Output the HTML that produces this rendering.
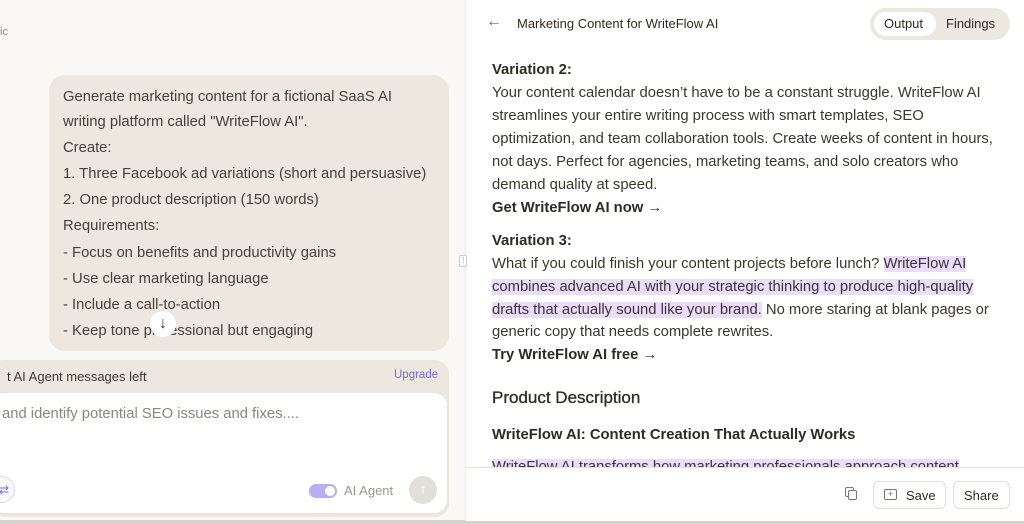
<!DOCTYPE html>
<html><head><meta charset="utf-8"><style>
*{margin:0;padding:0;box-sizing:border-box}
body{width:1024px;height:524px;overflow:hidden;font-family:"Liberation Sans",sans-serif;background:#f9f8f5;position:relative;color:#3a3632}
.a{position:absolute;white-space:nowrap}
.lt{font-size:14.8px;color:#46413b;left:63px}
.rt{font-size:14.8px;color:#3a3632;left:492px}
.b{font-weight:bold;color:#2e2a26}
.hl{background:#ebdcfb}
</style></head><body>
<div class="a" style="left:0;top:26px;font-size:11px;color:#888">ic</div>
<div class="a" style="left:49px;top:75px;width:400px;height:276px;background:#ece8df;border-radius:16px"></div>
<div class="a lt" style="top:89px">Generate marketing content for a fictional SaaS AI</div>
<div class="a lt" style="top:114px">writing platform called "WriteFlow AI".</div>
<div class="a lt" style="top:140px">Create:</div>
<div class="a lt" style="top:166px">1. Three Facebook ad variations (short and persuasive)</div>
<div class="a lt" style="top:192px">2. One product description (150 words)</div>
<div class="a lt" style="top:218px">Requirements:</div>
<div class="a lt" style="top:245px">- Focus on benefits and productivity gains</div>
<div class="a lt" style="top:271px">- Use clear marketing language</div>
<div class="a lt" style="top:297px">- Include a call-to-action</div>
<div class="a lt" style="top:323px">- Keep tone professional but engaging</div>
<div class="a" style="left:150px;top:311px;width:26px;height:26px;border-radius:50%;background:#fff;text-align:center;font-size:16px;line-height:26px;color:#333">↓</div>
<div class="a" style="left:-10px;top:360px;width:459px;height:157px;background:#ece8df;border-radius:14px"></div>
<div class="a" style="left:7px;top:369px;font-size:13px;color:#3d3833">t AI Agent messages left</div>
<div class="a" style="left:394px;top:369px;font-size:11.5px;color:#7a68d8">Upgrade</div>
<div class="a" style="left:-10px;top:392px;width:458px;height:122px;background:#fff;border-radius:14px;border:1px solid #e8e4dc"></div>
<div class="a" style="left:2px;top:406px;font-size:14.8px;color:#8a8580">and identify potential SEO issues and fixes....</div>
<div class="a" style="left:-12px;top:476px;width:27px;height:27px;border-radius:50%;border:1px solid #ddd4f5;background:#faf8ff;color:#7a68d8;font-size:12px;text-align:right;padding-right:5px;line-height:26px">⇄</div>
<div class="a" style="left:309px;top:484px;width:28px;height:14px;border-radius:7px;background:#b9aef0"><div style="position:absolute;right:2px;top:2px;width:10px;height:10px;border-radius:50%;background:#fff"></div></div>
<div class="a" style="left:344px;top:483px;font-size:13px;color:#9a958f">AI Agent</div>
<div class="a" style="left:409px;top:476px;width:28px;height:28px;border-radius:50%;background:#e2dfdb;color:#fff;text-align:center;line-height:28px;font-size:15px">↑</div>
<div class="a" style="left:0;top:520px;width:465px;height:4px;background:#d6d3cf"></div>
<div class="a" style="left:465px;top:0;width:559px;height:524px;background:#fff;border-left:1px solid #ecebe8"></div>
<div class="a" style="left:459px;top:255px;width:8px;height:12px;border:1px solid #ccc;border-radius:2px;background:#fff;font-size:7px;line-height:10px;text-align:center;color:#888">⋮</div>
<div class="a" style="left:486px;top:13px;font-size:16px;color:#666">←</div>
<div class="a" style="left:517px;top:16px;font-size:13px;color:#2e2a26">Marketing Content for WriteFlow AI</div>
<div class="a" style="left:870px;top:8px;width:140px;height:32px;border-radius:16px;background:#ece8df"></div>
<div class="a" style="left:874px;top:12px;width:62px;height:24px;border-radius:12px;background:#fff"></div>
<div class="a" style="left:884px;top:16px;font-size:13px;color:#2e2a26">Output</div>
<div class="a" style="left:946px;top:16px;font-size:13px;color:#2e2a26">Findings</div>
<div class="a rt b" style="top:62px">Variation 2:</div>
<div class="a rt" style="top:85px">Your content calendar doesn’t have to be a constant struggle. WriteFlow AI</div>
<div class="a rt" style="top:108px">streamlines your entire writing process with smart templates, SEO</div>
<div class="a rt" style="top:131px">optimization, and team collaboration tools. Create weeks of content in hours,</div>
<div class="a rt" style="top:154px">not days. Perfect for agencies, marketing teams, and solo creators who</div>
<div class="a rt" style="top:177px">demand quality at speed.</div>
<div class="a rt b" style="top:200px">Get WriteFlow AI now →</div>
<div class="a rt b" style="top:233px">Variation 3:</div>
<div class="a rt" style="top:256px">What if you could finish your content projects before lunch? <span class="hl">WriteFlow AI </span></div>
<div class="a rt" style="top:279px"><span class="hl">combines advanced AI with your strategic thinking to produce high-quality </span></div>
<div class="a rt" style="top:302px"><span class="hl">drafts that actually sound like your brand.</span> No more staring at blank pages or</div>
<div class="a rt" style="top:324px">generic copy that needs complete rewrites.</div>
<div class="a rt b" style="top:347px">Try WriteFlow AI free →</div>
<div class="a rt" style="top:388px;font-size:17px;color:#2e2a26;-webkit-text-stroke:0.3px #2e2a26">Product Description</div>
<div class="a rt b" style="top:427px">WriteFlow AI: Content Creation That Actually Works</div>
<div class="a rt" style="top:459px;height:8px;overflow:hidden"><span class="hl">WriteFlow AI transforms how marketing professionals approach content </span></div>
<div class="a" style="left:466px;top:467px;width:558px;height:57px;background:#fff;border-top:1px solid #e6e4e0"></div>
<div class="a" style="left:845px;top:487px;width:9px;height:10px;border:1.3px solid #777;border-radius:2px"></div>
<div class="a" style="left:848px;top:490px;width:9px;height:10px;border:1.3px solid #777;border-radius:2px;background:#fff"></div>
<div class="a" style="left:873px;top:481px;width:73px;height:28px;border:1px solid #e2dfda;border-radius:6px"></div>
<div class="a" style="left:884px;top:489px;width:13px;height:11px;border:1.2px solid #777;border-radius:2px;font-size:9px;line-height:9px;text-align:center;color:#777">+</div>
<div class="a" style="left:906px;top:488px;font-size:13px;color:#2e2a26">Save</div>
<div class="a" style="left:953px;top:481px;width:57px;height:28px;border:1px solid #e2dfda;border-radius:6px"></div>
<div class="a" style="left:964px;top:488px;font-size:13px;color:#2e2a26">Share</div>
<div class="a" style="left:0;top:521px;width:1024px;height:3px;background:#d6d3cf"></div>
</body></html>
